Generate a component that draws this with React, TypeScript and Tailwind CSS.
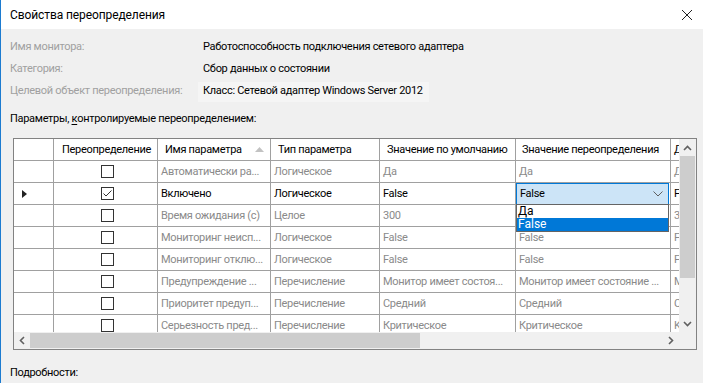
import React from "react";

type Row = {
  name: string;
  type: string;
  def: string;
  over: string;
  last: string;
  checked?: boolean;
  active?: boolean;
};

// row 3's override value sits under the open dropdown list, so it is left empty
const rows: Row[] = [
  { name: "Автоматически ра...", type: "Логическое", def: "Да", over: "Да", last: "Д" },
  { name: "Включено", type: "Логическое", def: "False", over: "False", last: "F", checked: true, active: true },
  { name: "Время ожидания (с)", type: "Целое", def: "300", over: "", last: "3" },
  { name: "Мониторинг неисп...", type: "Логическое", def: "False", over: "False", last: "F" },
  { name: "Мониторинг отклю...", type: "Логическое", def: "False", over: "False", last: "F" },
  { name: "Предупреждение ...", type: "Перечисление", def: "Монитор имеет состоя...", over: "Монитор имеет состояние ...", last: "M" },
  { name: "Приоритет предуп...", type: "Перечисление", def: "Средний", over: "Средний", last: "C" },
  { name: "Серьезность пред...", type: "Перечисление", def: "Критическое", over: "Критическое", last: "K" },
];

const cell = "h-full shrink-0 overflow-hidden whitespace-nowrap border-r border-[#a0a0a0] pl-[3px] leading-[21px]";

function Checkbox({ checked }: { checked?: boolean }) {
  return (
    <div className="flex h-[13px] w-[13px] items-center justify-center border border-[#333] bg-white">
      {checked && (
        <svg width="11" height="11" viewBox="0 0 11 11">
          <path d="M1.5 5.5 L4 8 L9.5 2.5" fill="none" stroke="#333" strokeWidth="1" />
        </svg>
      )}
    </div>
  );
}

function Combo() {
  return (
    <div className="relative h-full w-[155px] shrink-0 border-r border-[#a0a0a0]">
      <div className="flex h-[22px] w-[153px] items-center justify-between border border-[#0078d7] bg-[#cce4f7] pl-[3px] pr-[5px] text-black">
        <span>False</span>
        <svg width="10" height="6" viewBox="0 0 10 6">
          <path d="M0.5 0.5 L5 5 L9.5 0.5" fill="none" stroke="#606060" strokeWidth="1" />
        </svg>
      </div>
      <div className="absolute left-0 top-[21px] z-10 flex w-[153px] flex-col border border-[#646464] bg-white text-[12px] leading-[13px] tracking-normal">
        <div className="h-[13px] pl-[1px] text-black">Да</div>
        <div className="h-[13px] bg-[#0078d7] pl-[1px] text-white">False</div>
      </div>
    </div>
  );
}

export default function App() {
  return (
    <div className="relative flex h-[383px] w-[703px] flex-col overflow-hidden border-l border-[#1c7bd0] bg-[#f0f0f0] font-['Roboto',Arial,sans-serif] text-[11px] tracking-[-0.3px] text-black">
      <header className="flex h-[29px] shrink-0 items-center justify-between bg-white pl-[9px] pr-[10px]">
        <span className="text-[12px] tracking-[-0.1px]">Свойства переопределения</span>
        <svg width="12" height="12" viewBox="0 0 12 12">
          <path d="M1 1 L11 11 M11 1 L1 11" stroke="#222" strokeWidth="1" />
        </svg>
      </header>

      <section className="mt-[7px] flex flex-col whitespace-nowrap pl-[9px]">
        <div className="flex h-[22px] items-center">
          <span className="w-[193px] text-[#a0a0a0]">Имя монитора:</span>
          <span>Работоспособность подключения сетевого адаптера</span>
        </div>
        <div className="flex h-[22px] items-center">
          <span className="w-[193px] text-[#a0a0a0]">Категория:</span>
          <span>Сбор данных о состоянии</span>
        </div>
        <div className="flex h-[23px] items-center">
          <span className="w-[188px] text-[#a0a0a0]">Целевой объект переопределения:</span>
          <span className="flex h-[20px] items-center bg-[#f5f5f5] px-[5px] pr-[6px]">Класс: Сетевой адаптер Windows Server 2012</span>
        </div>
        <div className="mt-[5px] flex h-[22px] items-center">
          Параметры,&nbsp;<span className="underline underline-offset-2">к</span>онтролируемые переопределением:
        </div>
      </section>

      <div className="ml-[12px] mt-[8px] flex h-[212px] w-[684px] shrink-0 flex-col border border-[#828282] bg-white">
        <div className="flex h-[193px]">
          <div className="flex w-[665px] flex-col overflow-hidden">
            <div className="flex h-[22px] shrink-0 border-b border-[#a0a0a0] bg-white">
              <div className={`${cell} w-[40px]`} />
              <div className={`${cell} w-[104px] pl-[8px]`}>Переопределение</div>
              <div className={`${cell} flex w-[113px] items-center justify-between pl-[7px] pr-[6px]`}>
                <span>Имя параметра</span>
                <svg width="9" height="5" viewBox="0 0 9 5">
                  <path d="M0 5 L4.5 0 L9 5 Z" fill="#c2c2c2" />
                </svg>
              </div>
              <div className={`${cell} w-[109px] pl-[7px]`}>Тип параметра</div>
              <div className={`${cell} w-[136px] pl-[7px]`}>Значение по умолчанию</div>
              <div className={`${cell} w-[155px] pl-[6px]`}>Значение переопределения</div>
              <div className={`${cell} w-[8px] border-r-0 pl-[2px]`}>Д</div>
            </div>
            {rows.map((r, i) => (
              <div
                key={i}
                className={`flex h-[22px] shrink-0 border-b border-[#a0a0a0] ${r.active ? "text-black" : "text-[#8a8a8a]"}`}
              >
                <div className={`${cell} flex w-[40px] items-center pl-[8px]`}>
                  {r.active && (
                    <svg width="5" height="8" viewBox="0 0 5 8">
                      <path d="M0 0 L5 4 L0 8 Z" fill="#222" />
                    </svg>
                  )}
                </div>
                <div className={`${cell} flex w-[104px] items-center justify-center pl-0`}>
                  <Checkbox checked={r.checked} />
                </div>
                <div className={`${cell} w-[113px]`}>{r.name}</div>
                <div className={`${cell} w-[109px]`}>{r.type}</div>
                <div className={`${cell} w-[136px]`}>{r.def}</div>
                {r.active ? <Combo /> : <div className={`${cell} w-[155px]`}>{r.over}</div>}
                <div className={`${cell} w-[8px] border-r-0 pl-[1px]`}>{r.last}</div>
              </div>
            ))}
          </div>

          <div className="flex w-[17px] shrink-0 flex-col bg-[#f0f0f0]">
            <div className="flex h-[17px] items-center justify-center">
              <svg width="9" height="6" viewBox="0 0 9 6">
                <path d="M1 5 L4.5 1.5 L8 5" fill="none" stroke="#606060" strokeWidth="1.6" />
              </svg>
            </div>
            <div className="mx-[1px] h-[122px] bg-[#cdcdcd]" />
            <div className="flex-1" />
            <div className="flex h-[17px] items-center justify-center">
              <svg width="9" height="6" viewBox="0 0 9 6">
                <path d="M1 1 L4.5 4.5 L8 1" fill="none" stroke="#606060" strokeWidth="1.6" />
              </svg>
            </div>
          </div>
        </div>

        <div className="flex h-[17px] bg-[#f0f0f0]">
          <div className="flex w-[665px] items-center">
            <div className="flex h-[17px] w-[16px] items-center justify-center">
              <svg width="6" height="9" viewBox="0 0 6 9">
                <path d="M5 1 L1.5 4.5 L5 8" fill="none" stroke="#606060" strokeWidth="1.6" />
              </svg>
            </div>
            <div className="h-[15px] w-[390px] bg-[#cdcdcd]" />
            <div className="flex-1" />
            <div className="flex h-[17px] w-[16px] items-center justify-center">
              <svg width="6" height="9" viewBox="0 0 6 9">
                <path d="M1 1 L4.5 4.5 L1 8" fill="none" stroke="#606060" strokeWidth="1.6" />
              </svg>
            </div>
          </div>
          <div className="w-[17px]" />
        </div>
      </div>

      <div className="mt-[15px] pl-[9px]">Подробности:</div>
    </div>
  );
}
